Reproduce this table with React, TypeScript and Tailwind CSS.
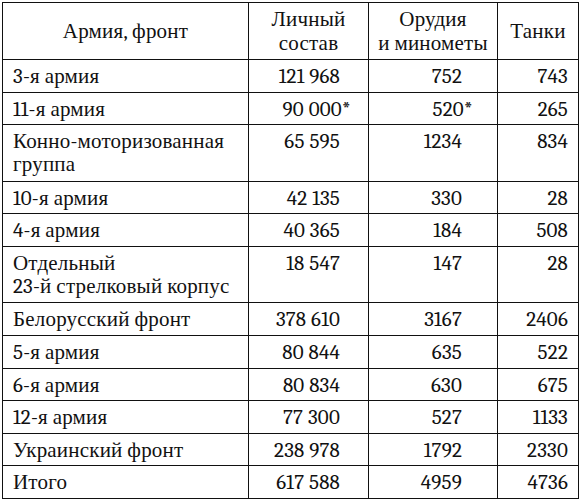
const rows: { name: string[]; staff: string; guns: string; tanks: string; mark?: boolean }[] = [
  { name: ["3-я армия"], staff: "121 968", guns: "752", tanks: "743" },
  { name: ["11-я армия"], staff: "90 000", guns: "520", tanks: "265", mark: true },
  { name: ["Конно-моторизованная", "группа"], staff: "65 595", guns: "1234", tanks: "834" },
  { name: ["10-я армия"], staff: "42 135", guns: "330", tanks: "28" },
  { name: ["4-я армия"], staff: "40 365", guns: "184", tanks: "508" },
  { name: ["Отдельный", "23-й стрелковый корпус"], staff: "18 547", guns: "147", tanks: "28" },
  { name: ["Белорусский фронт"], staff: "378 610", guns: "3167", tanks: "2406" },
  { name: ["5-я армия"], staff: "80 844", guns: "635", tanks: "522" },
  { name: ["6-я армия"], staff: "80 834", guns: "630", tanks: "675" },
  { name: ["12-я армия"], staff: "77 300", guns: "527", tanks: "1133" },
  { name: ["Украинский фронт"], staff: "238 978", guns: "1792", tanks: "2330" },
  { name: ["Итого"], staff: "617 588", guns: "4959", tanks: "4736" },
];

const cell = "border border-[#111] align-top pt-[5px] leading-[23px]";

export default function App() {
  return (
    <div className="min-h-screen bg-white pl-[2px] pt-[2px] text-[#111] font-serif text-[21px] tracking-[0.2px]">
      <table className="w-[576px] table-fixed border-collapse">
        <colgroup>
          <col className="w-[246px]" />
          <col className="w-[120px]" />
          <col className="w-[129px]" />
          <col className="w-[81px]" />
        </colgroup>
        <thead>
          <tr className="h-[57px]">
            <th className="border border-[#111] text-center align-middle font-normal leading-[24px]">Армия, фронт</th>
            <th className="border border-[#111] text-center align-middle font-normal leading-[24px]">
              Личный
              <br />
              состав
            </th>
            <th className="border border-[#111] text-center align-middle font-normal leading-[24px]">
              Орудия
              <br />
              и минометы
            </th>
            <th className="border border-[#111] text-center align-middle font-normal leading-[24px]">Танки</th>
          </tr>
        </thead>
        <tbody>
          {rows.map((r) => (
            <tr key={r.name.join(" ")} className={r.name.length > 1 ? "h-[56.5px]" : "h-[32.6px]"}>
              <td className={`${cell} pl-[10px]`}>
                {r.name.map((line) => (
                  <div key={line}>{line}</div>
                ))}
              </td>
              <td className={`${cell} pr-[28px] text-right`}>
                {r.staff}
                {r.mark && <span className="-mr-[11px]">*</span>}
              </td>
              <td className={`${cell} pr-[35px] text-right`}>
                {r.guns}
                {r.mark && <span className="-mr-[11px]">*</span>}
              </td>
              <td className={`${cell} pr-[10px] text-right`}>{r.tanks}</td>
            </tr>
          ))}
        </tbody>
      </table>
    </div>
  );
}
